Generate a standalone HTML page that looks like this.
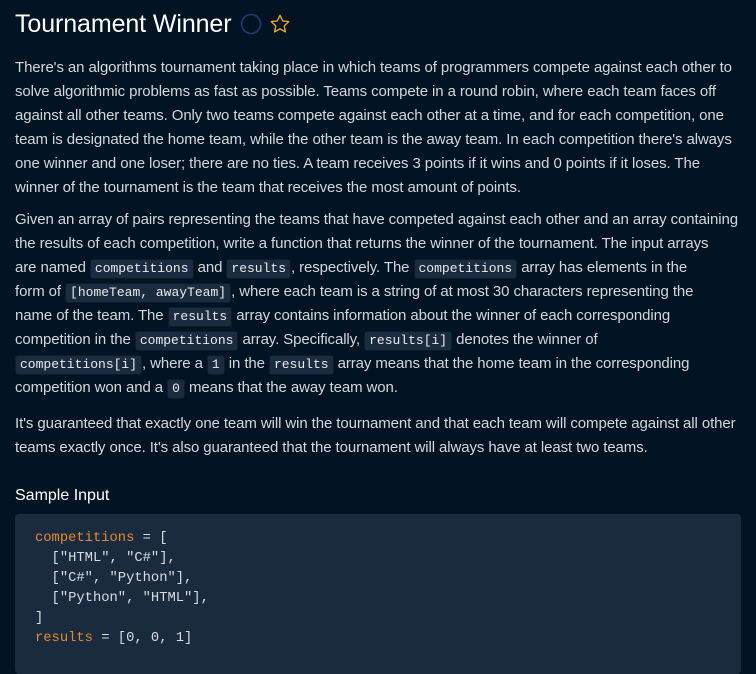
<!DOCTYPE html>
<html><head><meta charset="utf-8"><style>
body{margin:0;background:#021423;width:756px;height:657px;overflow:hidden;font-family:"Liberation Sans",sans-serif;color:#d3d7dc}
.wrap{position:absolute;left:15px;top:0;width:730px}
h1{position:absolute;left:0;top:10px;margin:0;font-size:25px;font-weight:normal;color:#fff;white-space:nowrap;letter-spacing:-0.1px}
.p{position:absolute;left:0;font-size:15px;line-height:24px;white-space:nowrap;letter-spacing:-0.1px}
code{font-family:"Liberation Mono",monospace;font-size:13px;line-height:16px;display:inline-block;background:#1b2c40;border:1px solid #0d1c2c;border-radius:3px;padding:1px 4px;color:#e8ebee;letter-spacing:0}
h2{position:absolute;left:0;top:487px;margin:0;font-size:16px;font-weight:normal;color:#fff}
.code{position:absolute;left:0;top:514px;width:726px;height:160px;background:#1a2b40;border-radius:4px}
pre{margin:0;position:absolute;left:20px;top:15px;font-family:"Liberation Mono",monospace;font-size:13.8px;line-height:20px;color:#d8dce0}
.o{color:#e58a2c}
</style></head><body><div class="wrap">
<h1>Tournament Winner <svg width="22" height="22" viewBox="0 0 22 22" style="vertical-align:-3px;margin-left:2px"><circle cx="11" cy="11" r="9.5" fill="none" stroke="#24397a" stroke-width="1.5"/></svg> <svg width="22" height="22" viewBox="0 0 24 24" style="vertical-align:-3px"><path d="M12 2.5l2.9 6.1 6.6.8-4.9 4.6 1.3 6.6L12 17.3l-5.9 3.3 1.3-6.6-4.9-4.6 6.6-.8z" fill="none" stroke="#e9a92a" stroke-width="1.5" stroke-linejoin="round"/></svg></h1>
<div class="p" style="top:56px">There's an algorithms tournament taking place in which teams of programmers compete against each other to<br>solve algorithmic problems as fast as possible. Teams compete in a round robin, where each team faces off<br>against all other teams. Only two teams compete against each other at a time, and for each competition, one<br>team is designated the home team, while the other team is the away team. In each competition there's always<br>one winner and one loser; there are no ties. A team receives 3 points if it wins and 0 points if it loses. The<br>winner of the tournament is the team that receives the most amount of points.</div>
<div class="p" style="top:208px">Given an array of pairs representing the teams that have competed against each other and an array containing<br>the results of each competition, write a function that returns the winner of the tournament. The input arrays<br>are named <code>competitions</code> and <code>results</code>, respectively. The <code>competitions</code> array has elements in the<br>form of <code>[homeTeam, awayTeam]</code>, where each team is a string of at most 30 characters representing the<br>name of the team. The <code>results</code> array contains information about the winner of each corresponding<br>competition in the <code>competitions</code> array. Specifically, <code>results[i]</code> denotes the winner of<br><code>competitions[i]</code>, where a <code>1</code> in the <code>results</code> array means that the home team in the corresponding<br>competition won and a <code>0</code> means that the away team won.</div>
<div class="p" style="top:412px">It's guaranteed that exactly one team will win the tournament and that each team will compete against all other<br>teams exactly once. It's also guaranteed that the tournament will always have at least two teams.</div>
<h2>Sample Input</h2>
<div class="code"><pre><span class="o">competitions</span> = [
  ["HTML", "C#"],
  ["C#", "Python"],
  ["Python", "HTML"],
]
<span class="o">results</span> = [0, 0, 1]</pre></div>
</div></body></html>
